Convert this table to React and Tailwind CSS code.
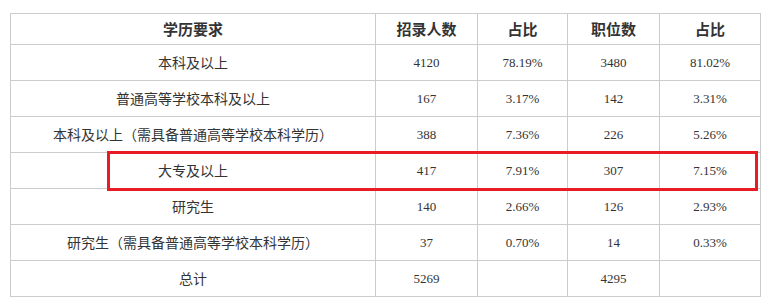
import React from 'react';

const rows = [
  { edu: '本科及以上', hire: '4120', hireRatio: '78.19%', posts: '3480', postRatio: '81.02%' },
  { edu: '普通高等学校本科及以上', hire: '167', hireRatio: '3.17%', posts: '142', postRatio: '3.31%' },
  { edu: '本科及以上（需具备普通高等学校本科学历）', hire: '388', hireRatio: '7.36%', posts: '226', postRatio: '5.26%' },
  { edu: '大专及以上', hire: '417', hireRatio: '7.91%', posts: '307', postRatio: '7.15%' },
  { edu: '研究生', hire: '140', hireRatio: '2.66%', posts: '126', postRatio: '2.93%' },
  { edu: '研究生（需具备普通高等学校本科学历）', hire: '37', hireRatio: '0.70%', posts: '14', postRatio: '0.33%' },
  { edu: '总计', hire: '5269', hireRatio: '', posts: '4295', postRatio: '' },
];

const cjk = "font-['Noto_Sans_CJK_SC',sans-serif]";
const num = "font-['Liberation_Serif','Noto_Sans_CJK_SC',serif] text-[13px]";

export default function App() {
  return (
    <div className="min-h-[307px] w-[773px] bg-white pl-[10px] pt-[13px] text-[#333]">
      <div className="relative w-[750px]">
        <table className={`w-[750px] table-fixed border-collapse ${cjk}`}>
          <colgroup>
            <col className="w-[365px]" />
            <col className="w-[102px]" />
            <col className="w-[90px]" />
            <col className="w-[92px]" />
            <col className="w-[101px]" />
          </colgroup>
          <thead>
            <tr className="h-[31px]">
              <th className="border border-[#cccccc] p-0 text-center text-[15px] font-bold">学历要求</th>
              <th className="border border-[#cccccc] p-0 text-center text-[15px] font-bold">招录人数</th>
              <th className="border border-[#cccccc] p-0 text-center text-[15px] font-bold">占比</th>
              <th className="border border-[#cccccc] p-0 text-center text-[15px] font-bold">职位数</th>
              <th className="border border-[#cccccc] p-0 text-center text-[15px] font-bold">占比</th>
            </tr>
          </thead>
          <tbody>
            {rows.map((r) => (
              <tr key={r.edu} className="h-[36px]">
                <td className="border border-[#cccccc] p-0 text-center text-[14px]">{r.edu}</td>
                <td className={`border border-[#cccccc] p-0 text-center ${num}`}>{r.hire}</td>
                <td className={`border border-[#cccccc] p-0 text-center ${num}`}>{r.hireRatio}</td>
                <td className={`border border-[#cccccc] p-0 text-center ${num}`}>{r.posts}</td>
                <td className={`border border-[#cccccc] p-0 text-center ${num}`}>{r.postRatio}</td>
              </tr>
            ))}
          </tbody>
        </table>
        {/* 大专及以上 行的红框标注 */}
        <div className="pointer-events-none absolute left-[97px] top-[138px] h-[40px] w-[651px] border-[3px] border-[#e81c24]" />
      </div>
    </div>
  );
}
